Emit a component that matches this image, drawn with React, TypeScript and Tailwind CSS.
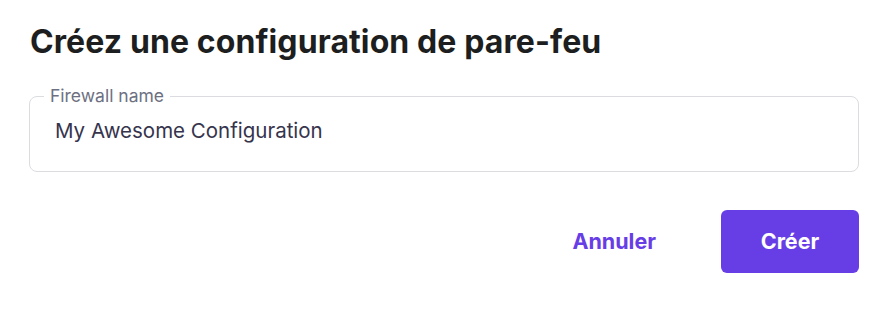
import React, { useState } from 'react';

const App: React.FC = () => {
  const [name, setName] = useState('My Awesome Configuration');

  return (
    <div className="w-[892px] h-[312px] bg-white pl-[29px] pr-[33px] pt-[22px] font-['Inter',sans-serif]">
      <h2 className="text-[32px] leading-[40px] font-bold text-[#1d1e20] tracking-[0.1px] pl-px">
        Créez une configuration de pare-feu
      </h2>

      <fieldset className="mt-[23px] h-[87px] border border-[#dadce0] rounded-lg px-[14px]">
        <legend className="px-[6px] text-[17.5px] leading-[22px] text-[#6d7081]">Firewall name</legend>
        <input
          className="w-full bg-transparent outline-none px-[11px] pt-[10px] text-[20.5px] leading-[28px] text-[#36344d]"
          value={name}
          onChange={(e) => setName(e.target.value)}
        />
      </fieldset>

      <div className="mt-[38px] flex items-center justify-end gap-[33px]">
        <button className="px-[32px] h-[63px] rounded-lg text-[21.5px] font-bold text-[#673de6] hover:bg-[#ebe4ff]">
          Annuler
        </button>
        <button className="w-[138px] h-[63px] rounded-[6px] bg-[#673de6] text-white text-[21.5px] font-bold hover:bg-[#8c6af0]">
          Créer
        </button>
      </div>
    </div>
  );
};

export default App;
